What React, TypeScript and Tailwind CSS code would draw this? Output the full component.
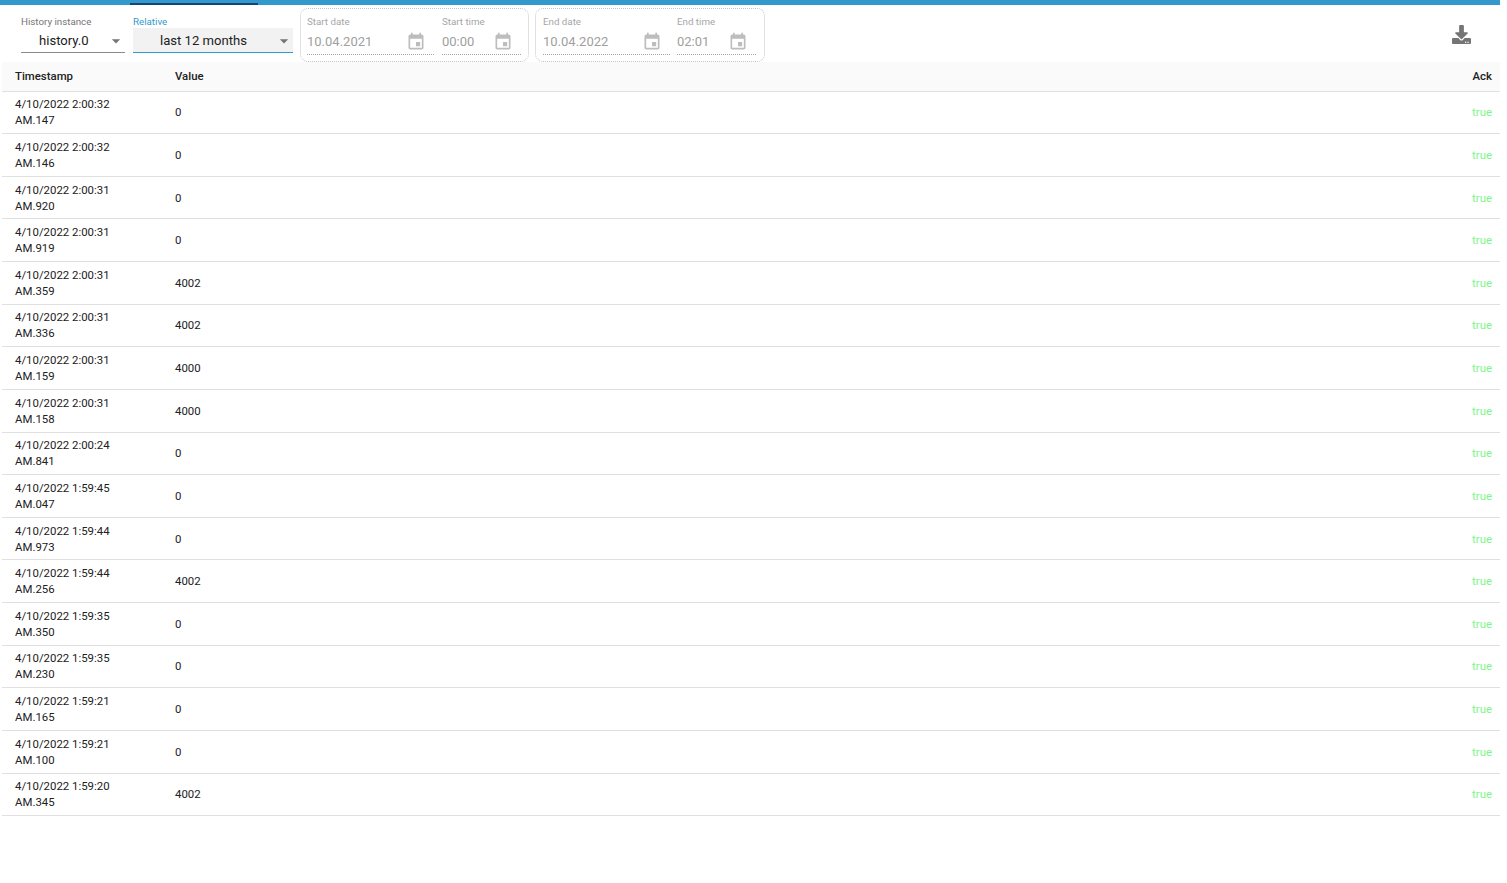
import { FaDownload } from 'react-icons/fa';

const rows = [
  ['4/10/2022 2:00:32', 'AM.147', '0'],
  ['4/10/2022 2:00:32', 'AM.146', '0'],
  ['4/10/2022 2:00:31', 'AM.920', '0'],
  ['4/10/2022 2:00:31', 'AM.919', '0'],
  ['4/10/2022 2:00:31', 'AM.359', '4002'],
  ['4/10/2022 2:00:31', 'AM.336', '4002'],
  ['4/10/2022 2:00:31', 'AM.159', '4000'],
  ['4/10/2022 2:00:31', 'AM.158', '4000'],
  ['4/10/2022 2:00:24', 'AM.841', '0'],
  ['4/10/2022 1:59:45', 'AM.047', '0'],
  ['4/10/2022 1:59:44', 'AM.973', '0'],
  ['4/10/2022 1:59:44', 'AM.256', '4002'],
  ['4/10/2022 1:59:35', 'AM.350', '0'],
  ['4/10/2022 1:59:35', 'AM.230', '0'],
  ['4/10/2022 1:59:21', 'AM.165', '0'],
  ['4/10/2022 1:59:21', 'AM.100', '0'],
  ['4/10/2022 1:59:20', 'AM.345', '4002'],
];

function CalendarIcon() {
  return (
    <svg viewBox="0 0 24 24" className="w-5 h-5 fill-[#bdbdbd]">
      <path d="M17 12h-5v5h5v-5zM16 1v2H8V1H6v2H5c-1.11 0-1.99.9-1.99 2L3 19c0 1.1.89 2 2 2h14c1.1 0 2-.9 2-2V5c0-1.1-.9-2-2-2h-1V1h-2zm3 18H5V8h14v11z" />
    </svg>
  );
}

function Caret() {
  return (
    <svg viewBox="0 0 24 24" className="w-5 h-5 -mr-[1px] fill-[#757575]">
      <path d="M7 10l5 5 5-5z" />
    </svg>
  );
}

function DateField({ label, value, width }: { label: string; value: string; width: string }) {
  return (
    <div className={width}>
      <div className="text-[9.75px] leading-[12px] text-[#a6a6a6]">{label}</div>
      <div className="flex items-center justify-between h-[26px] mt-[1px] pr-[8px] border-b border-dotted border-[#a6a6a6]">
        <span className="text-[13px] text-[#a0a0a0]">{value}</span>
        <CalendarIcon />
      </div>
    </div>
  );
}

function App() {
  return (
    <div className="w-[1500px] h-[883px] bg-white font-['Roboto',sans-serif] text-[#212121]">
      <div className="h-[5px] bg-[#3399cc] pl-[130px] flex items-end">
        <div className="w-[128px] h-[2px] bg-[#164477]" />
      </div>

      <div className="flex h-[57px] pt-[3px]">
        <div className="w-[104px] ml-[21px] pt-[8px]">
          <div className="text-[9.75px] leading-[12px] text-[#757575]">History instance</div>
          <div className="flex items-center justify-between h-[25px] pl-[18px] pt-[1px] border-b border-[#8a8a8a] text-[13.1px]">
            <span>history.0</span>
            <Caret />
          </div>
        </div>

        <div className="w-[160px] ml-[8px] pt-[8px]">
          <div className="text-[9.75px] leading-[12px] text-[#3399cc]">Relative</div>
          <div className="flex items-center justify-between h-[25px] pl-[27px] pt-[1px] bg-[#f2f2f2] border-b border-[#3399cc] text-[13.1px]">
            <span>last 12 months</span>
            <Caret />
          </div>
        </div>

        <div className="flex w-[229px] h-[54px] ml-[7px] px-[6px] pt-[7px] gap-[8px] border border-dotted border-[#c4c4c4] rounded-[8px]">
          <DateField label="Start date" value="10.04.2021" width="w-[127px]" />
          <DateField label="Start time" value="00:00" width="w-[79px]" />
        </div>

        <div className="flex w-[230px] h-[54px] ml-[6px] px-[7px] pt-[7px] gap-[7px] border border-dotted border-[#c4c4c4] rounded-[8px]">
          <DateField label="End date" value="10.04.2022" width="w-[127px]" />
          <DateField label="End time" value="02:01" width="w-[79px]" />
        </div>

        <div className="ml-auto mr-[29px] mt-[17px] text-[#757575] text-[19px]">
          <FaDownload />
        </div>
      </div>

      <table className="w-[1498px] ml-[2px] table-fixed border-collapse text-[11.4px] leading-[16px]">
        <thead>
          <tr className="h-[29px] bg-[#fafafa] border-b border-[#e0e0e0]">
            <th className="w-[173px] pl-[13px] text-left font-medium">Timestamp</th>
            <th className="text-left font-medium">Value</th>
            <th className="w-[100px] pr-[8px] text-right font-medium">Ack</th>
          </tr>
        </thead>
        <tbody>
          {rows.map((r, i) => (
            <tr key={i} className="h-[42.64px] border-b border-[#e0e0e0]">
              <td className="pl-[13px]">
                {r[0]}
                <br />
                {r[1]}
              </td>
              <td>{r[2]}</td>
              <td className="pr-[8px] text-right text-[#7cf58a]">true</td>
            </tr>
          ))}
        </tbody>
      </table>
    </div>
  );
}

export default App;
